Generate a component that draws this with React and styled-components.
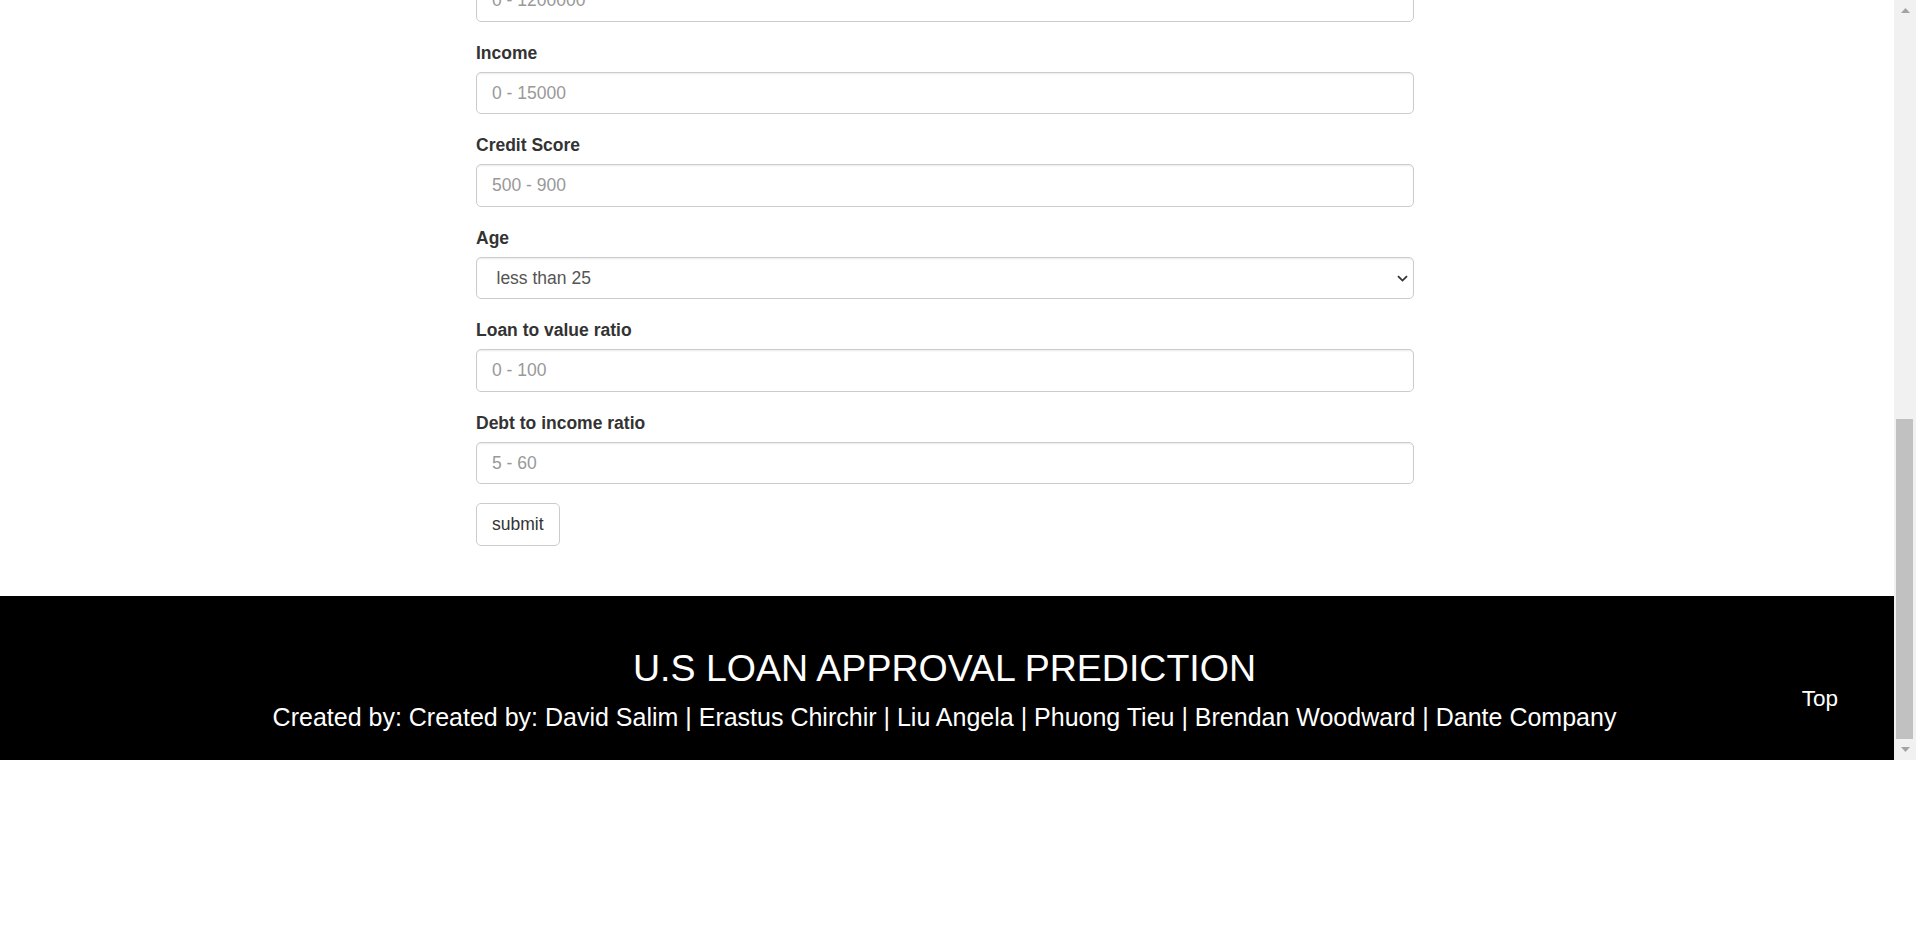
import React, { useLayoutEffect, useRef } from 'react';
import styled, { createGlobalStyle, css } from 'styled-components';

const GlobalStyle = createGlobalStyle`
  html, body {
    margin: 0;
    padding: 0;
    background: #fff;
  }
  body {
    font-family: "Liberation Sans", Arial, Helvetica, sans-serif;
    color: #333;
  }
  * {
    box-sizing: border-box;
  }
`

const Frame = styled.div`
  display: flex;
  height: 760px;
`

const Viewport = styled.div`
  flex: 1;
  min-width: 0;
  overflow-y: scroll;
  overflow-x: hidden;
  scrollbar-width: none;
  background: #fff;
  &::-webkit-scrollbar {
    display: none;
  }
`

const ScrollBar = styled.div`
  width: 22px;
  display: flex;
  flex-direction: column;
  background: #f1f1f1;
`

const ScrollButton = styled.div`
  height: 21px;
  display: flex;
  align-items: center;
  justify-content: center;
`

const ScrollTrack = styled.div`
  flex: 1;
  display: flex;
  flex-direction: column;
  justify-content: flex-end;
  padding: 0 3px 0 2px;
`

const ScrollThumb = styled.div`
  height: 320px;
  background: #c1c1c1;
`

const NavBar = styled.nav`
  height: 62.5px;
  background: #000;
  color: #fff;
  display: flex;
  align-items: center;
  padding: 0 56px;
  font-size: 22.5px;
`

const Hero = styled.header`
  padding: 90px 0 80px;
  text-align: center;
  background: #f5f5f5;

  h1 {
    margin: 0 0 20px;
    font-size: 45px;
    line-height: 50px;
    font-weight: 400;
  }
  p {
    margin: 0;
    font-size: 22.5px;
    line-height: 32px;
  }
`

const FormColumn = styled.main`
  width: 937.5px;
  margin: 0 0 50.5px calc(50% - 471px);
  padding-top: 45px;
`

const Group = styled.div`
  margin-bottom: 18.75px;
`

const Label = styled.label`
  display: block;
  font-size: 17.5px;
  line-height: 25px;
  font-weight: 700;
  color: #333;
  margin-bottom: 6.25px;
`

const control = css`
  display: block;
  width: 100%;
  height: 42.5px;
  padding: 7.5px 15px;
  font-family: "Liberation Sans", Arial, Helvetica, sans-serif;
  font-size: 17.5px;
  line-height: 25px;
  color: #555;
  background: #fff;
  border: 1px solid #ccc;
  border-radius: 5px;
  box-shadow: inset 0 1.25px 1.25px rgba(0, 0, 0, 0.075);
  outline: none;
`

const Input = styled.input`
  ${control}
  &::placeholder {
    color: #999;
  }
`

const SelectWrap = styled.div`
  position: relative;
`

const Select = styled.select`
  ${control}
  appearance: none;
  padding-left: 19.5px;
`

const Chevron = styled.svg`
  position: absolute;
  right: 6px;
  top: 50%;
  margin-top: -3px;
  pointer-events: none;
`

const SubmitButton = styled.button`
  height: 42.5px;
  padding: 7.5px 15px;
  font-family: "Liberation Sans", Arial, Helvetica, sans-serif;
  font-size: 17.5px;
  line-height: 25px;
  color: #333;
  background: #fff;
  border: 1px solid #ccc;
  border-radius: 5px;
  cursor: pointer;
`

const Footer = styled.footer`
  height: 164px;
  background: #000;
  color: #fff;
  display: grid;
  grid-template-columns: 1fr auto 1fr;
`

const FooterCenter = styled.div`
  grid-column: 2;
  text-align: center;
  padding: 51.5px 5px 0 0;
`

const FooterTitle = styled.h2`
  margin: 0 0 10.8px;
  font-size: 37.5px;
  line-height: 41.25px;
  font-weight: 400;
`

const Credits = styled.p`
  margin: 0;
  font-size: 25px;
  line-height: 35.7px;
`

const TopLink = styled.a`
  grid-column: 3;
  justify-self: end;
  align-self: start;
  margin: 86.5px 56px 0 0;
  color: #fff;
  font-size: 22.5px;
  line-height: 32px;
  text-decoration: none;
`

const fields = [
  { label: 'Loan Amount', placeholder: '0 - 3500000' },
  { label: 'Rate of Interest', placeholder: '0 - 8' },
  { label: 'Interest Rate Spread', placeholder: '-3 - 4' },
  { label: 'Upfront Charges', placeholder: '0 - 60000' },
  { label: 'Term', placeholder: '96 - 360' },
  { label: 'Property Value', placeholder: '0 - 1200000' },
  { label: 'Income', placeholder: '0 - 15000' },
  { label: 'Credit Score', placeholder: '500 - 900' },
  { label: 'Age', options: ['less than 25', '25-34', '35-44', '45-54', '55-64', '65-74', 'more than 74'] },
  { label: 'Loan to value ratio', placeholder: '0 - 100' },
  { label: 'Debt to income ratio', placeholder: '5 - 60' },
]

function FormField({ label, placeholder, options }) {
  const id = label.toLowerCase().replace(/\s+/g, '_')
  return (
    <Group>
      <Label htmlFor={id}>{label}</Label>
      {options ? (
        <SelectWrap>
          <Select id={id} defaultValue={options[0]}>
            {options.map((o) => <option key={o}>{o}</option>)}
          </Select>
          <Chevron width="11" height="7" viewBox="0 0 11 7">
            <path d="M1 1.2 L5.5 5.6 L10 1.2" fill="none" stroke="#333" strokeWidth="1.8" />
          </Chevron>
        </SelectWrap>
      ) : (
        <Input id={id} type="text" placeholder={placeholder} />
      )}
    </Group>
  )
}

export default function App() {
  const scroller = useRef(null)

  useLayoutEffect(() => {
    const el = scroller.current
    if (el) el.scrollTop = el.scrollHeight
  }, [])

  return (
    <>
      <GlobalStyle />
      <Frame>
        <Viewport ref={scroller}>
          <NavBar>Loan Approval</NavBar>
          <Hero>
            <h1>U.S Loan Approval Prediction</h1>
            <p>Fill in the applicant details below to predict loan approval.</p>
          </Hero>
          <FormColumn>
            <form onSubmit={(e) => e.preventDefault()}>
              {fields.map((f) => <FormField key={f.label} {...f} />)}
              <SubmitButton type="submit">submit</SubmitButton>
            </form>
          </FormColumn>
          <Footer>
            <FooterCenter>
              <FooterTitle>U.S LOAN APPROVAL PREDICTION</FooterTitle>
              <Credits>Created by: Created by: David Salim | Erastus Chirchir | Liu Angela | Phuong Tieu | Brendan Woodward | Dante Company</Credits>
            </FooterCenter>
            <TopLink href="#">Top</TopLink>
          </Footer>
        </Viewport>
        <ScrollBar>
          <ScrollButton>
            <svg width="9" height="5" viewBox="0 0 9 5"><polygon points="0,5 4.5,0 9,5" fill="#a3a3a3" /></svg>
          </ScrollButton>
          <ScrollTrack>
            <ScrollThumb />
          </ScrollTrack>
          <ScrollButton>
            <svg width="9" height="5" viewBox="0 0 9 5"><polygon points="0,0 4.5,5 9,0" fill="#a3a3a3" /></svg>
          </ScrollButton>
        </ScrollBar>
      </Frame>
    </>
  )
}
